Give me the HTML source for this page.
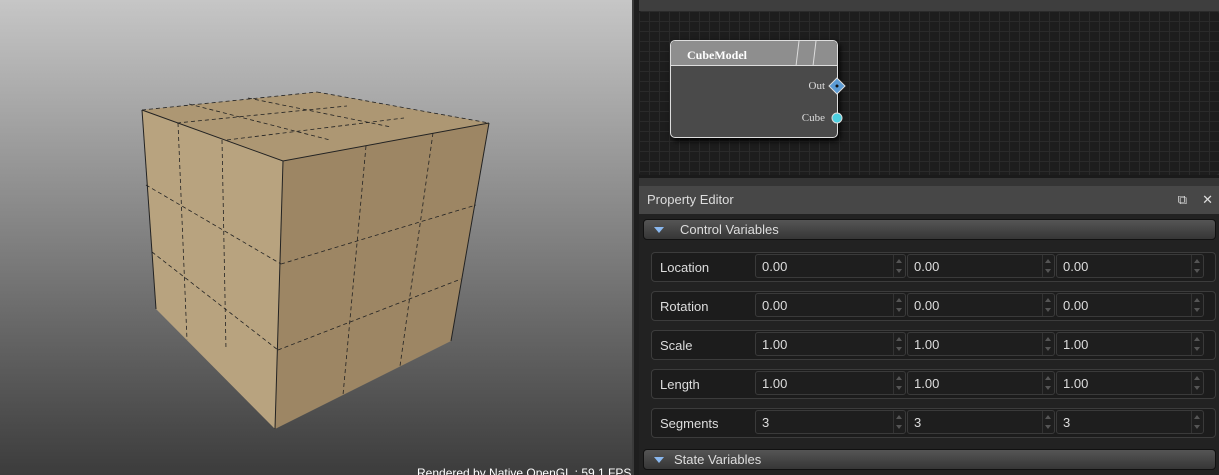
<!DOCTYPE html>
<html><head><style>
html,body{margin:0;width:1219px;height:475px;overflow:hidden}
body{background:#2d2d2d;font-family:"Liberation Sans",sans-serif;position:relative}
.vp{position:absolute;left:0;top:0;width:632px;height:475px;background:linear-gradient(#c6c6c6,#3c3c3c)}
.sep{position:absolute;left:632px;top:0;width:7px;height:475px;background:#1e1e1e;border-left:2px solid #3a3a3a}
.topband{position:absolute;left:639px;top:0;width:580px;height:11px;background:#3e3e3e}
.graph{position:absolute;left:639px;top:11px;width:580px;height:164px;background-color:#1d1d1d;background-image:linear-gradient(#2a2a2a 1px,transparent 1px),linear-gradient(90deg,#2a2a2a 1px,transparent 1px);background-size:10px 10px;border-radius:3px}
.gsep{position:absolute;left:639px;top:175px;width:580px;height:11px;background:#353535;border-top:3px solid #1a1a1a;box-sizing:border-box}
.node{position:absolute;left:670px;top:40px;width:166px;height:96px;border:1px solid #ddd;border-radius:5px;background:#4a4a4a;box-shadow:2px 3px 6px #000;overflow:hidden}
.nh{height:24px;background:#8e8e8e;border-bottom:1px solid #ddd;color:#fff;font:bold 12px "Liberation Serif",serif;line-height:28px;padding-left:16px}
.pl{position:absolute;right:12px;color:#ddd;font:11px "Liberation Serif",serif}
.pe{position:absolute;left:639px;top:186px;width:580px;height:289px;background:#222}
.peh{height:28px;background:#474747;color:#ddd;font-size:13px;line-height:28px;padding-left:8px}
.sec{position:absolute;left:4px;width:571px;height:19px;border-radius:4px;background:linear-gradient(#555,#363636);border:1px solid #111;color:#ddd;font-size:13px;line-height:19px}
.tri{position:absolute;left:10px;top:7px;width:0;height:0;border-left:5px solid transparent;border-right:5px solid transparent;border-top:6px solid #8ab8ef}
.row{position:absolute;left:12px;width:563px;height:28px;border:1px solid #3c3c3c;border-radius:4px;background:#1c1c1c}
.lab{position:absolute;left:8px;top:7px;color:#ddd;font-size:13px}
.f{position:absolute;top:1px;height:24px;border:1px solid #3a3a3a;border-radius:3px;background:#1e1e1e;color:#ddd;font-size:13px;line-height:24px;padding-left:6px;box-sizing:border-box}
.sp{position:absolute;right:0;top:0;width:11px;height:22px;border-left:1px solid #333}
.sp:before{content:"";position:absolute;left:2px;top:4px;border:3.5px solid transparent;border-bottom:4px solid #555;border-top:0}
.sp:after{content:"";position:absolute;left:2px;top:14px;border:3.5px solid transparent;border-top:4px solid #555;border-bottom:0}
</style></head><body>
<div class="vp"></div>
<svg style="position:absolute;left:0;top:0" width="632" height="475">
<polygon points="142,110 317,92 489,123 283,161" fill="#ad9773"/>
<polygon points="142,110 283,161 275,429 156,309" fill="#b8a37f"/>
<polygon points="283,161 489,123 451,341 275,429" fill="#9d8664"/>
<g stroke="#222" stroke-width="0.8" fill="none" stroke-dasharray="4,3">
<line x1="142" y1="110" x2="317" y2="92"/><line x1="317" y1="92" x2="489" y2="123"/>
<line x1="189" y1="104" x2="330" y2="140"/><line x1="248" y1="98" x2="391" y2="127"/>
<line x1="177" y1="123" x2="347" y2="106"/><line x1="227" y1="140" x2="404" y2="118"/>
<line x1="178" y1="123" x2="187" y2="340"/><line x1="222" y1="140" x2="226" y2="350"/>
<line x1="146" y1="185" x2="281" y2="264"/><line x1="152" y1="252" x2="278" y2="350"/>
<line x1="366" y1="146" x2="343" y2="395"/><line x1="433" y1="133" x2="400" y2="366"/>
<line x1="281" y1="264" x2="476" y2="205"/><line x1="278" y1="350" x2="461" y2="279"/>
</g>
<g stroke="#222" stroke-width="1" fill="none">
<polyline points="142,110 283,161 489,123"/><line x1="283" y1="161" x2="275" y2="429"/>
<line x1="142" y1="110" x2="156" y2="309"/><line x1="489" y1="123" x2="451" y2="341"/>
</g>
</svg>
<div style="position:absolute;left:417px;top:466px;color:#fff;font-size:12px">Rendered by Native OpenGL : 59.1 FPS</div>
<div class="sep"></div>
<div class="topband"></div>
<div class="graph"></div>
<div class="gsep"></div>
<div class="node"><div class="nh">CubeModel</div>
<svg style="position:absolute;left:118px;top:0" width="30" height="25"><path d="M7 25 L10 0 M24 25 L27 0" stroke="#ddd" stroke-width="1"/></svg>
<span class="pl" style="top:39px">Out</span><span class="pl" style="top:71px">Cube</span></div>
<svg style="position:absolute;left:827px;top:77px" width="20" height="50"><polygon points="10,1 18,9 10,17 2,9" fill="#5b9bd5" stroke="#ddd"/><circle cx="10" cy="9" r="1.5" fill="#111"/><circle cx="10" cy="41" r="5" fill="#4dd0e1" stroke="#ddd"/></svg>
<div class="pe">
<div class="peh">Property Editor<span style="position:absolute;right:32px;top:0">⧉</span><span style="position:absolute;right:6px;top:0">✕</span></div>
<div class="sec" style="top:33px"><div class="tri"></div><span style="position:absolute;left:36px">Control Variables</span></div>
<div class="row" style="top:66px"><span class="lab">Location</span><div class="f" style="left:103px;width:151px">0.00<div class="sp"></div></div><div class="f" style="left:255px;width:148px">0.00<div class="sp"></div></div><div class="f" style="left:404px;width:148px">0.00<div class="sp"></div></div></div>
<div class="row" style="top:105px"><span class="lab">Rotation</span><div class="f" style="left:103px;width:151px">0.00<div class="sp"></div></div><div class="f" style="left:255px;width:148px">0.00<div class="sp"></div></div><div class="f" style="left:404px;width:148px">0.00<div class="sp"></div></div></div>
<div class="row" style="top:144px"><span class="lab">Scale</span><div class="f" style="left:103px;width:151px">1.00<div class="sp"></div></div><div class="f" style="left:255px;width:148px">1.00<div class="sp"></div></div><div class="f" style="left:404px;width:148px">1.00<div class="sp"></div></div></div>
<div class="row" style="top:183px"><span class="lab">Length</span><div class="f" style="left:103px;width:151px">1.00<div class="sp"></div></div><div class="f" style="left:255px;width:148px">1.00<div class="sp"></div></div><div class="f" style="left:404px;width:148px">1.00<div class="sp"></div></div></div>
<div class="row" style="top:222px"><span class="lab">Segments</span><div class="f" style="left:103px;width:151px">3<div class="sp"></div></div><div class="f" style="left:255px;width:148px">3<div class="sp"></div></div><div class="f" style="left:404px;width:148px">3<div class="sp"></div></div></div>
<div class="sec" style="top:263px"><div class="tri"></div><span style="position:absolute;left:30px">State Variables</span></div>
</div>
</body></html>
